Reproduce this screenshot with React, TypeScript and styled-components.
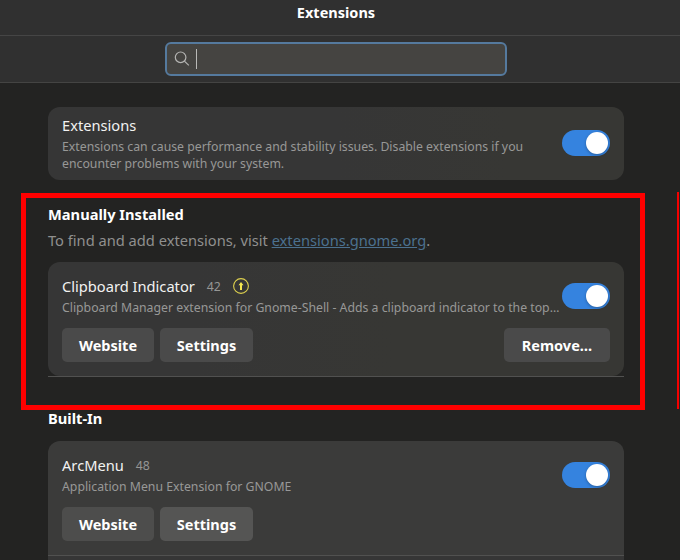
import React from "react";
import styled, { createGlobalStyle } from "styled-components";

const GlobalStyle = createGlobalStyle`
  * { box-sizing: border-box; }
  body {
    margin: 0;
    background: #232322;
    color: #f2f2f1;
    font-family: "Noto Sans", "Open Sans", sans-serif;
    font-size: 14.67px;
    line-height: 20px;
  }
`;

const Window = styled.div`
  position: relative;
  width: 680px;
  height: 560px;
  overflow: hidden;
  background: #232322;
`;

const HeaderBar = styled.header`
  height: 36px;
  padding: 2px 8px 0 0;
  background: #303030;
  border-bottom: 1px solid #454545;
  text-align: center;
  font-size: 14.5px;
  font-weight: 700;
  color: #ffffff;
`;

const SearchBar = styled.div`
  display: flex;
  justify-content: center;
  height: 47px;
  padding: 6px 8px 0 0;
  background: #303030;
  border-bottom: 1px solid #444443;
`;

const SearchEntry = styled.div`
  display: flex;
  align-items: center;
  gap: 6px;
  width: 342px;
  height: 34px;
  padding-left: 7px;
  border: 2px solid #557a9e;
  border-radius: 6px;
  background: #454441;
`;

const Caret = styled.span`
  width: 1px;
  height: 20px;
  background: #b9b9b7;
`;

const Content = styled.main`
  display: flex;
  flex-direction: column;
  width: 576px;
  margin-left: 48px;
  padding-top: 24px;
`;

const GlobalCard = styled.section`
  display: flex;
  align-items: flex-start;
  justify-content: space-between;
  height: 73px;
  padding: 8px 14px 0;
  border-radius: 12px;
  background: linear-gradient(90deg, #363636 50%, #373734 80%);
`;

const GlobalText = styled.div`
  width: 480px;
`;

const Section = styled.section<{ $gap: number }>`
  display: flex;
  flex-direction: column;
  margin-top: ${(p) => p.$gap}px;
`;

const Heading = styled.h2`
  margin: 0;
  padding-bottom: 2px;
  font-size: 14.67px;
  line-height: 18px;
  font-weight: 700;
  color: #ffffff;
`;

const Hint = styled.p`
  margin: 5px 0 0;
  color: #90908f;
`;

const Link = styled.a`
  color: #4c718f;
  text-decoration: underline;
`;

const ExtensionCard = styled.article<{ $bottom: boolean; $fill: string; $top: number }>`
  height: 114px;
  margin-top: ${(p) => p.$top}px;
  padding: 14px 14px 0;
  border-radius: ${(p) => (p.$bottom ? "12px" : "12px 12px 0 0")};
  background: ${(p) => p.$fill};
`;

const Divider = styled.div`
  height: 1px;
  background: #515150;
`;

const NextRow = styled.div`
  height: 20px;
  background: #363636;
`;

const Summary = styled.div`
  display: flex;
  justify-content: space-between;
  height: 52px;
`;

const SummaryText = styled.div`
  width: 500px;
  min-width: 0;
`;

const TitleLine = styled.div`
  display: flex;
  align-items: center;
  height: 20px;
`;

const Version = styled.span`
  margin: 2px 12px 0;
  font-size: 12.27px;
  color: #969695;
`;

const Description = styled.p`
  margin: 3px 0 0;
  font-size: 12.27px;
  line-height: 17px;
  color: #989897;
`;

const OneLine = styled(Description)`
  white-space: nowrap;
`;

const Track = styled.div<{ $top: number }>`
  display: flex;
  flex: none;
  justify-content: flex-end;
  align-items: center;
  width: 48px;
  height: 26px;
  margin-top: ${(p) => p.$top}px;
  padding-right: 2px;
  border-radius: 13px;
  background: #3583df;
`;

const Knob = styled.span`
  width: 22px;
  height: 22px;
  border-radius: 50%;
  background: #ffffff;
  box-shadow: 0 1px 3px rgba(0, 0, 0, 0.3);
`;

const Actions = styled.div`
  display: flex;
  gap: 6px;
`;

const Button = styled.button<{ $width: number; $fill?: string; $end?: boolean }>`
  width: ${(p) => p.$width}px;
  height: 34px;
  margin: 0 0 0 ${(p) => (p.$end ? "auto" : "0")};
  padding: 0;
  border: 0;
  border-radius: 5px;
  background: ${(p) => p.$fill ?? "#4a4a4a"};
  color: #ffffff;
  font: 700 14.5px "Noto Sans", sans-serif;
`;

const Highlight = styled.div`
  position: absolute;
  left: 21px;
  top: 193px;
  width: 624px;
  height: 217px;
  border: 5px solid #ff0000;
`;

const HighlightEdge = styled.div`
  position: absolute;
  left: 677px;
  top: 192px;
  width: 2px;
  height: 217px;
  background: #f50000;
`;

const Switch = ({ top }: { top: number }) => (
  <Track $top={top} role="switch" aria-checked="true">
    <Knob />
  </Track>
);

const SearchIcon = () => (
  <svg width="16" height="16" viewBox="0 0 16 16" fill="none" stroke="#b4b4b2" strokeWidth="1.2">
    <circle cx="6.6" cy="6.3" r="5.3" />
    <path d="M10.4 10.1 14.8 14.4" />
  </svg>
);

const UpdateIcon = () => (
  <svg width="16" height="16" viewBox="0 0 16 16">
    <circle cx="8" cy="8" r="7.4" fill="none" stroke="#ddd04e" strokeWidth="1.1" />
    <path d="M8 4 10.5 7.3H9V12H7V7.3H5.5Z" fill="#f5e750" />
  </svg>
);

export default function App() {
  return (
    <Window>
      <GlobalStyle />
      <HeaderBar>Extensions</HeaderBar>
      <SearchBar>
        <SearchEntry>
          <SearchIcon />
          <Caret />
        </SearchEntry>
      </SearchBar>
      <Content>
        <GlobalCard>
          <GlobalText>
            <TitleLine>Extensions</TitleLine>
            <Description>
              Extensions can cause performance and stability issues. Disable extensions if you
              <br />
              encounter problems with your system.
            </Description>
          </GlobalText>
          <Switch top={15} />
        </GlobalCard>

        <Section $gap={25}>
          <Heading>Manually Installed</Heading>
          <Hint>
            To find and add extensions, visit <Link>extensions.gnome.org</Link>.
          </Hint>
          <ExtensionCard $bottom $top={12} $fill="linear-gradient(90deg, #363636 25%, #373734 60%)">
            <Summary>
              <SummaryText>
                <TitleLine>
                  Clipboard Indicator<Version>42</Version>
                  <UpdateIcon />
                </TitleLine>
                <OneLine>
                  Clipboard Manager extension for Gnome-Shell - Adds a clipboard indicator to the top…
                </OneLine>
              </SummaryText>
              <Switch top={7} />
            </Summary>
            <Actions>
              <Button $width={92}>Website</Button>
              <Button $width={93}>Settings</Button>
              <Button $width={106} $end>Remove…</Button>
            </Actions>
          </ExtensionCard>
          <Divider />
        </Section>

        <Section $gap={32}>
          <Heading>Built-In</Heading>
          <ExtensionCard $bottom={false} $top={12} $fill="#3b3b3a">
            <Summary>
              <SummaryText>
                <TitleLine>
                  ArcMenu<Version>48</Version>
                </TitleLine>
                <OneLine>Application Menu Extension for GNOME</OneLine>
              </SummaryText>
              <Switch top={7} />
            </Summary>
            <Actions>
              <Button $width={92} $fill="#4d4d4c">Website</Button>
              <Button $width={93} $fill="#555554">Settings</Button>
            </Actions>
          </ExtensionCard>
          <Divider />
          <NextRow />
        </Section>
      </Content>
      <Highlight />
      <HighlightEdge />
    </Window>
  );
}
